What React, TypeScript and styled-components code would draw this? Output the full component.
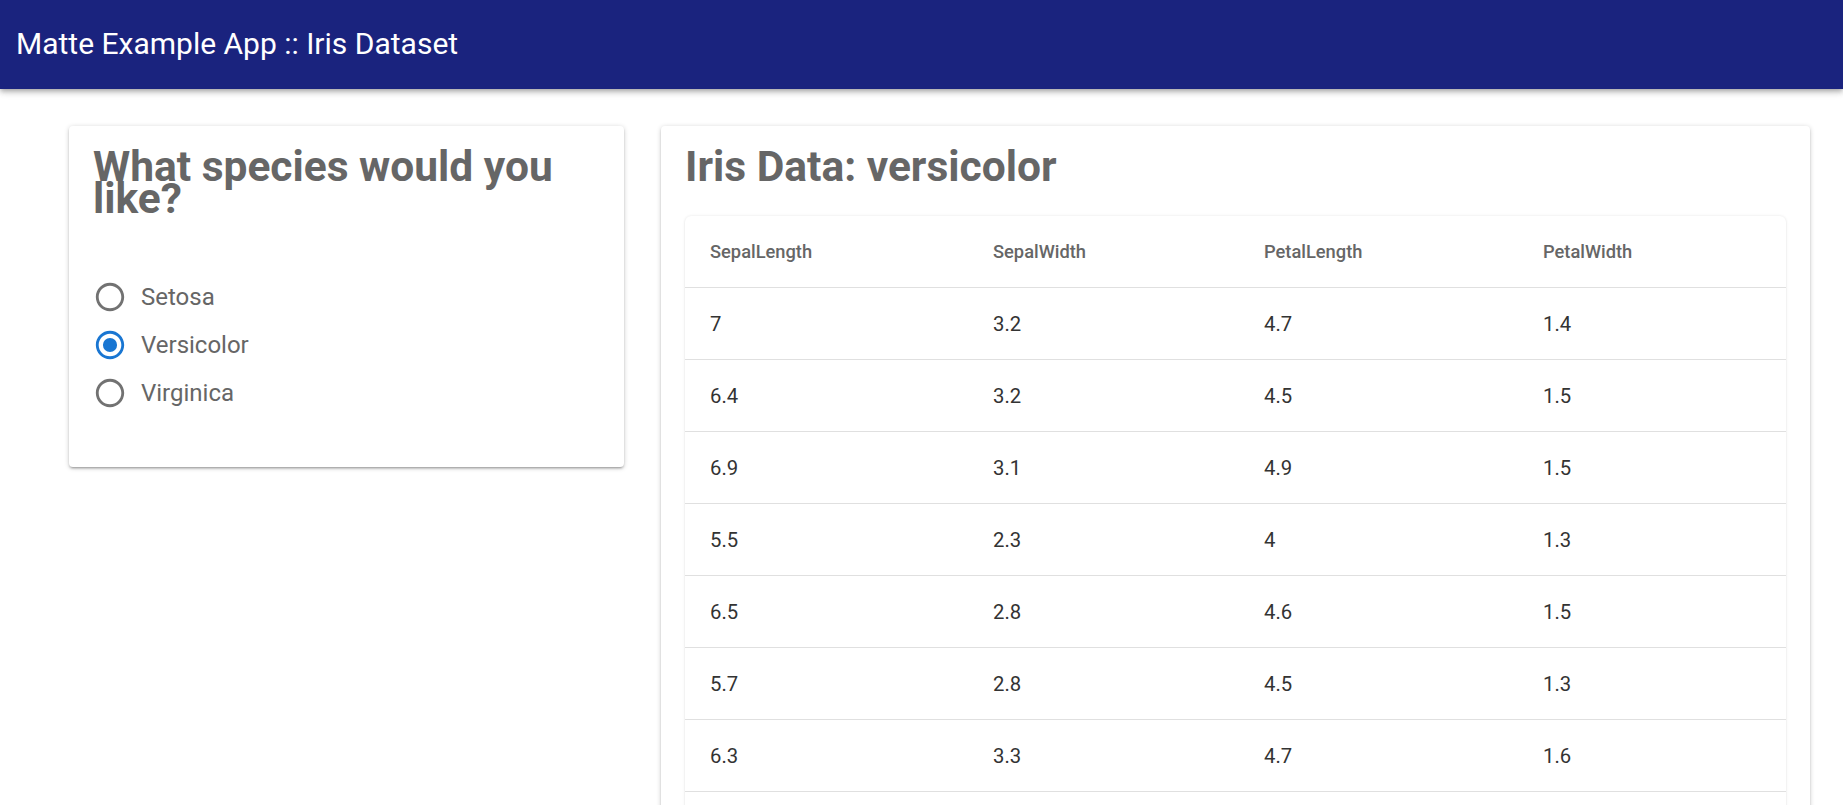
import React, { useState } from "react";
import styled, { createGlobalStyle } from "styled-components";

const GlobalStyle = createGlobalStyle`
  html, body {
    margin: 0;
    padding: 0;
    background: #ffffff;
    font-family: Roboto, "Noto Sans", "Liberation Sans", sans-serif;
  }
  * { box-sizing: border-box; }
`;

type Species = "setosa" | "versicolor" | "virginica";
type Row = [number, number, number, number];

const DATA: Record<Species, Row[]> = {
  setosa: [
    [5.1, 3.5, 1.4, 0.2], [4.9, 3.0, 1.4, 0.2], [4.7, 3.2, 1.3, 0.2], [4.6, 3.1, 1.5, 0.2],
    [5.0, 3.6, 1.4, 0.2], [5.4, 3.9, 1.7, 0.4], [4.6, 3.4, 1.4, 0.3], [5.0, 3.4, 1.5, 0.2],
  ],
  versicolor: [
    [7.0, 3.2, 4.7, 1.4], [6.4, 3.2, 4.5, 1.5], [6.9, 3.1, 4.9, 1.5], [5.5, 2.3, 4.0, 1.3],
    [6.5, 2.8, 4.6, 1.5], [5.7, 2.8, 4.5, 1.3], [6.3, 3.3, 4.7, 1.6], [4.9, 2.4, 3.3, 1.0],
    [6.6, 2.9, 4.6, 1.3], [5.2, 2.7, 3.9, 1.4], [5.0, 2.0, 3.5, 1.0], [5.9, 3.0, 4.2, 1.5],
    [6.0, 2.2, 4.0, 1.0], [6.1, 2.9, 4.7, 1.4], [5.6, 2.9, 3.6, 1.3], [6.7, 3.1, 4.4, 1.4],
    [5.6, 3.0, 4.5, 1.5], [5.8, 2.7, 4.1, 1.0], [6.2, 2.2, 4.5, 1.5], [5.6, 2.5, 3.9, 1.1],
    [5.9, 3.2, 4.8, 1.8], [6.1, 2.8, 4.0, 1.3], [6.3, 2.5, 4.9, 1.5], [6.1, 2.8, 4.7, 1.2],
    [6.4, 2.9, 4.3, 1.3], [6.6, 3.0, 4.4, 1.4], [6.8, 2.8, 4.8, 1.4], [6.7, 3.0, 5.0, 1.7],
    [6.0, 2.9, 4.5, 1.5], [5.7, 2.6, 3.5, 1.0], [5.5, 2.4, 3.8, 1.1], [5.5, 2.4, 3.7, 1.0],
    [5.8, 2.7, 3.9, 1.2], [6.0, 2.7, 5.1, 1.6], [5.4, 3.0, 4.5, 1.5], [6.0, 3.4, 4.5, 1.6],
    [6.7, 3.1, 4.7, 1.5], [6.3, 2.3, 4.4, 1.3], [5.6, 3.0, 4.1, 1.3], [5.5, 2.5, 4.0, 1.3],
    [5.5, 2.6, 4.4, 1.2], [6.1, 3.0, 4.6, 1.4], [5.8, 2.6, 4.0, 1.2], [5.0, 2.3, 3.3, 1.0],
    [5.6, 2.7, 4.2, 1.3], [5.7, 3.0, 4.2, 1.2], [5.7, 2.9, 4.2, 1.3], [6.2, 2.9, 4.3, 1.3],
    [5.1, 2.5, 3.0, 1.1], [5.7, 2.8, 4.1, 1.3],
  ],
  virginica: [
    [6.3, 3.3, 6.0, 2.5], [5.8, 2.7, 5.1, 1.9], [7.1, 3.0, 5.9, 2.1], [6.3, 2.9, 5.6, 1.8],
    [6.5, 3.0, 5.8, 2.2], [7.6, 3.0, 6.6, 2.1], [4.9, 2.5, 4.5, 1.7], [7.3, 2.9, 6.3, 1.8],
  ],
};

const OPTIONS: { value: Species; label: string }[] = [
  { value: "setosa", label: "Setosa" },
  { value: "versicolor", label: "Versicolor" },
  { value: "virginica", label: "Virginica" },
];

const COLUMNS = [
  { name: "SepalLength", width: 283 },
  { name: "SepalWidth", width: 271 },
  { name: "PetalLength", width: 279 },
  { name: "PetalWidth", width: 0 },
];

const AppBar = styled.header`
  height: 89px;
  background: #1a237e;
  color: #ffffff;
  display: flex;
  align-items: center;
  padding: 0 16px 2px 16px;
  font-size: 30px;
  font-weight: 400;
  box-shadow: 0 2px 4px -1px rgba(0, 0, 0, 0.2), 0 4px 5px 0 rgba(0, 0, 0, 0.14),
    0 1px 10px 0 rgba(0, 0, 0, 0.12);
  position: relative;
  z-index: 1;
`;

const Main = styled.main`
  display: flex;
  align-items: flex-start;
  gap: 37px;
  padding: 37px 33px 40px 69px;
`;

const Card = styled.section<{ $width?: number }>`
  background: #ffffff;
  border-radius: 4px;
  padding: 24px;
  flex: ${(p) => (p.$width ? `0 0 ${p.$width}px` : "1 1 auto")};
  min-width: 0;
  box-shadow: 0 2px 2px 0 rgba(0, 0, 0, 0.14), 0 3px 1px -2px rgba(0, 0, 0, 0.12),
    0 1px 5px 0 rgba(0, 0, 0, 0.2);
`;

const Title = styled.h1`
  margin: 1px 0 0 0;
  font-size: 42.5px;
  font-weight: 700;
  line-height: 32px;
  color: #666666;
`;

const RadioGroup = styled.div`
  display: flex;
  flex-direction: column;
  margin: 58px 0 26px 0;
`;

const RadioRow = styled.label`
  display: flex;
  align-items: center;
  gap: 14px;
  height: 48px;
  cursor: pointer;
  font-size: 24px;
  color: #666666;
`;

const HiddenInput = styled.input`
  position: absolute;
  opacity: 0;
  width: 0;
  height: 0;
  margin: 0;
`;

const RadioIcon = styled.svg<{ $checked: boolean }>`
  width: 34px;
  height: 34px;
  flex: 0 0 34px;
  fill: ${(p) => (p.$checked ? "#1976d2" : "#727272")};
`;

const TableCard = styled.div`
  margin-top: 33px;
  background: #ffffff;
  border-radius: 6px;
  box-shadow: 0 0 3px rgba(0, 0, 0, 0.1), 0 1px 2px rgba(0, 0, 0, 0.06);
  overflow: hidden;
`;

const Table = styled.table`
  width: 100%;
  border-collapse: separate;
  border-spacing: 0;
`;

const Col = styled.col<{ $w: number }>`
  width: ${(p) => (p.$w ? `${p.$w}px` : "auto")};
`;

const Th = styled.th`
  height: 72px;
  padding: 0 24px 0 25px;
  text-align: left;
  font-size: 18.3px;
  font-weight: 500;
  color: #666666;
  border-bottom: 1px solid #e0e0e0;
`;

const Td = styled.td`
  height: 72px;
  padding: 0 24px 0 25px;
  font-size: 20.3px;
  font-weight: 400;
  color: #333333;
  border-bottom: 1px solid #e0e0e0;
`;

function Radio({ checked }: { checked: boolean }) {
  return (
    <RadioIcon viewBox="0 0 24 24" $checked={checked} aria-hidden="true">
      <path d="M12 2C6.48 2 2 6.48 2 12s4.480 10 10 10 10-4.48 10-10S17.52 2 12 2zm0 18c-4.42 0-8-3.58-8-8s3.58-8 8-8 8 3.58 8 8-3.58 8-8 8z" />
      {checked && <circle cx="12" cy="12" r="5" />}
    </RadioIcon>
  );
}

export default function App() {
  const [species, setSpecies] = useState<Species>("versicolor");
  const rows = DATA[species];

  return (
    <>
      <GlobalStyle />
      <AppBar>Matte Example App :: Iris Dataset</AppBar>
      <Main>
        <Card $width={555}>
          <Title>What species would you like?</Title>
          <RadioGroup role="radiogroup">
            {OPTIONS.map((o) => (
              <RadioRow key={o.value}>
                <HiddenInput
                  type="radio"
                  name="species"
                  value={o.value}
                  checked={species === o.value}
                  onChange={() => setSpecies(o.value)}
                />
                <Radio checked={species === o.value} />
                {o.label}
              </RadioRow>
            ))}
          </RadioGroup>
        </Card>
        <Card>
          <Title>Iris Data: {species}</Title>
          <TableCard>
            <Table>
              <colgroup>
                {COLUMNS.map((c) => (
                  <Col key={c.name} $w={c.width} />
                ))}
              </colgroup>
              <thead>
                <tr>
                  {COLUMNS.map((c) => (
                    <Th key={c.name}>{c.name}</Th>
                  ))}
                </tr>
              </thead>
              <tbody>
                {rows.map((r, i) => (
                  <tr key={i}>
                    {r.map((v, j) => (
                      <Td key={j}>{String(v)}</Td>
                    ))}
                  </tr>
                ))}
              </tbody>
            </Table>
          </TableCard>
        </Card>
      </Main>
    </>
  );
}
